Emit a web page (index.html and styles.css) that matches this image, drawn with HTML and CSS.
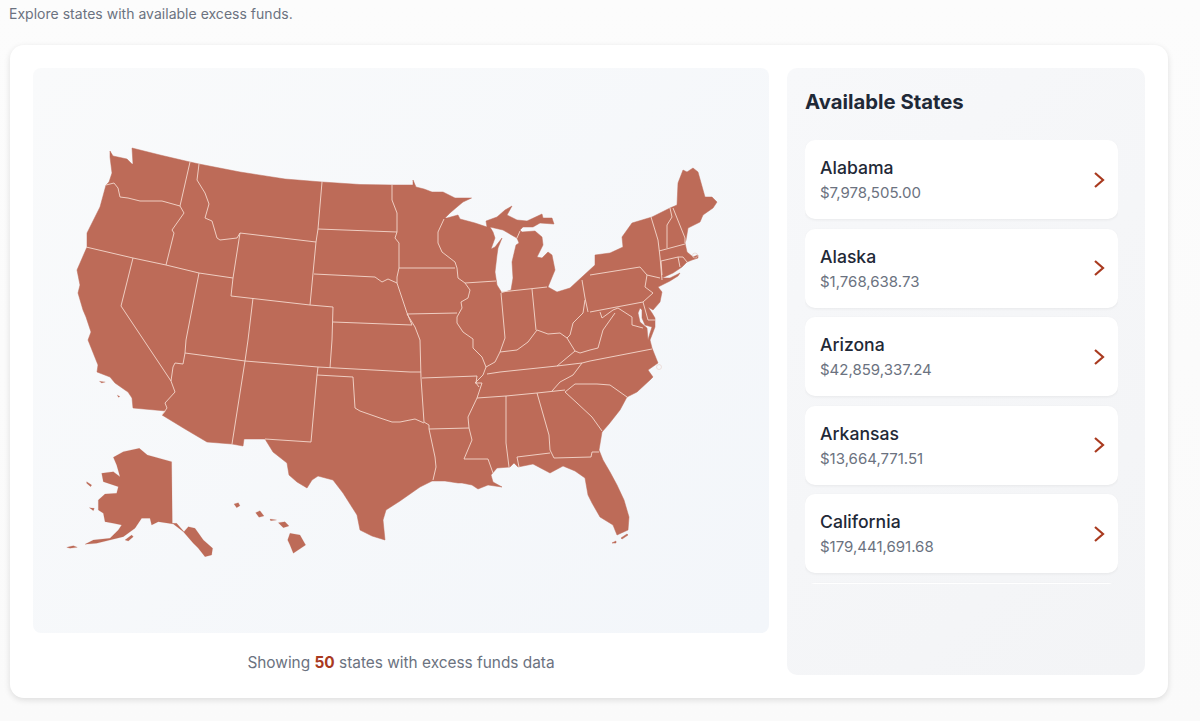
FILE: index.html
```html
<!DOCTYPE html>
<html lang="en">
<head>
<meta charset="utf-8">
<title>Available States</title>
<link rel="stylesheet" href="styles.css">
</head>
<body>
<p class="intro">Explore states with available excess funds.</p>
<main class="card">
  <section class="map-col">
    <div class="map-panel">
      <svg class="map" viewBox="33 68 736 565" aria-label="United States map">
        <path class="land" fill-rule="evenodd" d="M110,151 L113,156 127,159 132,164 133,164 132,148 160,155 190,162 199,164 240,172 285,179 322,182 360,184.5 392,185 413,185 413,180 416,187 424,189 432,192 443,192 455,198 471.5,198 463,202 457,207 450,213 445,218 447,218 458,215 460,219 475,223 487,227 486,221 497,217 505,210 512,206 507,215 517,220 527,221 542,214 543,218 552,218 554,224 540,223 533,227 523,227 520,230 522,232 535,231 542,237 543,245 537,257 542,258 548,252 552,255 555,270 548,287 557,292 570,288 583,276 595,265 595,255 610,253 623,247 622,237 632,223 652,217 670,208 677,205 678,183 683,170 687,172 693,168 698,172 705,197 712,197 717,202 713,208 703,215 700,222 688,228 686,240 685,243 687,252 693,257 698,255 698,258 692,260 687,262 682,267 673,273 662,278 670,278 680,273 678,276 670,281 658,287 662,292 660,302 653,310 648,307 652,313 655,318 655,327 650,340 652,348 658,363 648,370 653,377 650,380 637,392 627,397 620,410 609,424 602,432 599,450 603,460 610,472 617,485 624,500 629,517 628,530 617,535 613,525 600,517 592,503 588,495 585,478 575,471 563,466 550,473 533,464 518,467 514,463 510,467 497,468 491,475 493,482 502,487 488,485 478,489 472,485 462,483 458,483 445,481 432,481 420,487 410,494 400,501 386,510 383,520 385,540 372,536 360,530 357,515 343,493 333,480 318,476 312,480 307,488 297,482 289,475 287,463 273,452 265,439 244,439 243,446 232,444 207,442 185,429 162,415 166,411 133,408 132,398 128,392 125,390 115,383 110,377 97,372 98,365 88,340 91,332 86,317 83,310 78,293 80,285 77,270 87,247 87,233 90,227 100,207 106,185 109,182 112,173 110,157 Z M490,227 L503,230 515,237 517,238 519,243 516,245 512,262 513,278 511,290 502,293 497,285 495,272 497,255 498,248 502,238 495,247 491,249 495,238 493,232 Z M640,308 L638,313 640,322 647,328 648,340 650,333 652,327 645,325 642,318 642,310 Z"/>
        <path class="borders" d="M106,185 L114,183 118,188 120,197 128,198 140,201 162,201 180,206 M190,162 L180,206 184,213 172,230 174,233 166,265 M199,164 L197,180 205,193 209,204 205,218 212,221 217,238 220,240 237,238 240,233 M86,247 L133,258 166,265 199,273 233,278 M133,258 L121,306 171,381 175,392 165,403 167,408 162,415 M199,273 L186,340 185,353 183,364 175,363 173,367 171,381 M185,353 L245,361 318,367 410,372 421,372 M253,298 L248,340 245,361 232,444 M240,233 L233,278 231,296 310,305 333,307 M240,233 L316,242 M322,182 L318,229 316,242 310,305 M318,229 L397,232 M314,274 L375,277 382,282 388,279 397,283 M333,307 L332,340 330,368 M333,322 L412,325 M397,283 L407,313 412,325 M392,185 L392,200 397,213 397,232 395,238 399,243 399,268 397,277 397,283 M399,268 L455,268 M444,219 L438,232 438,243 442,252 455,262 457,268 458,278 465,283 496,281 M465,283 L470,290 468,298 461,302 462,308 457,317 457,323 463,332 473,339 473,348 482,357 486,367 M457,313 L407,314 415,327 420,340 421,378 424,422 429,425 429,429 469,428 M422,378 L477,376 476,383 479,387 M486,367 L483,375 475,383 482,383 477,398 468,417 469,428 472,440 464,459 488,459 493,473 M429,429 L435,457 436,467 433,480 M353,377 L355,408 360,411 380,418 392,422 400,422 415,419 424,423 M318,367 L317,375 353,377 M317,375 L311,442 265,439 M506,396 L506,443 509,467 M537,393 L549,435 550,450 554,458 591,457 592,452 599,452 M517,457 L550,453 M517,457 L519,467 M565,392 L577,403 592,417 602,431 M565,392 L575,384 597,384 610,385 627,397 M477,398 L506,396 537,393 565,390 M552,391 L560,382 573,375 582,363 M487,374 L500,372 557,366 582,363 590,361 652,349 M557,366 L575,351 M567,338 L575,351 M486,367 L495,362 500,352 517,350 528,342 537,330 548,334 560,333 567,338 M501,293 L505,338 500,352 M532,289 L536,330 M501,292 L547,287 M582,280 L585,298 588,312 M585,300 L583,313 573,323 570,335 567,338 M590,275 L640,267 647,275 660,278 M647,275 L645,287 653,293 643,302 M590,312 L643,302 648,320 655,320 M600,312 L602,318 613,310 618,308 632,317 632,325 643,328 M615,313 L603,330 598,348 590,350 580,353 575,351 M651,217 L658,240 660,257 662,280 M670,208 L672,217 667,225 667,248 M673,208 L685,238 685,243 M659,251 L685,244 M661,261 L678,257 683,257 687,262 M678,257 L680,267 M661,261 L662,275 M520,231 L517,238"/>
        <circle class="ring" cx="695" cy="255.500" r="2.500"/>
        <circle class="ring" cx="659" cy="367" r="2.500"/>
        <g class="land" transform="translate(60 340) scale(.3333)">
          <path d="M160,352 L190,335 238,325 262,345 335,365 337,550 350,550 372,575 385,560 405,565 430,600 458,625 455,645 435,650 415,625 400,610 370,575 340,552 295,545 275,555 270,535 245,535 225,565 190,590 150,600 110,610 75,613 100,600 150,595 175,570 185,555 160,550 135,545 130,520 115,510 115,480 135,462 170,460 175,440 130,425 125,400 160,395 180,410 170,375 Z"/>
          <path d="M195,600 L215,585 220,590 205,603 Z M20,622 L40,617 52,622 30,625 Z M80,425 L95,435 92,440 80,430 Z M88,503 L103,505 100,512 Z"/>
          <path d="M690,580 L720,585 737,615 700,640 690,615 683,600 Z M655,548 L675,545 687,558 670,563 Z M587,518 L600,512 612,528 597,532 Z M522,492 L535,488 540,497 530,503 Z M630,537 L650,540 632,542 Z M118,124 L136,126 125,129 Z M172,165 L180,170 175,172 Z"/>
        </g>
        <path class="land" d="M612,543 L616,541 616,543 Z M621,538 L627,534 628,535 622,539 Z"/>
      </svg>
    </div>
    <p class="count">Showing <strong>50</strong> states with excess funds data</p>
  </section>
  <aside class="sidebar">
    <h2>Available States</h2>
    <ul class="list">
      <li class="item"><div class="info"><div class="name">Alabama</div><div class="amount">$7,978,505.00</div></div><svg class="chev" viewBox="0 0 12 18"><path d="M2,2 L10,9 2,16"/></svg></li>
      <li class="item"><div class="info"><div class="name">Alaska</div><div class="amount">$1,768,638.73</div></div><svg class="chev" viewBox="0 0 12 18"><path d="M2,2 L10,9 2,16"/></svg></li>
      <li class="item"><div class="info"><div class="name">Arizona</div><div class="amount">$42,859,337.24</div></div><svg class="chev" viewBox="0 0 12 18"><path d="M2,2 L10,9 2,16"/></svg></li>
      <li class="item"><div class="info"><div class="name">Arkansas</div><div class="amount">$13,664,771.51</div></div><svg class="chev" viewBox="0 0 12 18"><path d="M2,2 L10,9 2,16"/></svg></li>
      <li class="item"><div class="info"><div class="name">California</div><div class="amount">$179,441,691.68</div></div><svg class="chev" viewBox="0 0 12 18"><path d="M2,2 L10,9 2,16"/></svg></li>
      <li class="item"></li>
    </ul>
  </aside>
</main>
</body>
</html>
```
FILE: styles.css
```css
* { box-sizing: border-box; }
html, body { margin: 0; height: 721px; overflow: hidden; }
body {
  background: linear-gradient(180deg, #fcfcfc 0%, #fafafa 100%);
  font-family: Inter, "Noto Sans", sans-serif;
  color: #1f2937;
  padding: 0 32px 0 10px;
}
.intro {
  margin: 0 0 0 -1px;
  height: 45px;
  padding-top: 6px;
  font-size: 14px;
  letter-spacing: .02px;
  line-height: 16px;
  color: #6b7280;
}
.card {
  width: 1158px;
  height: 653px;
  padding: 23px;
  display: flex;
  gap: 18px;
  background: #fff;
  border-radius: 14px;
  box-shadow: 0 2px 6px rgba(0, 0, 0, .12);
}
.map-col { width: 736px; flex: none; }
.map-panel {
  height: 565px;
  border-radius: 8px;
  overflow: hidden;
  background: linear-gradient(135deg, #f9fafb 0%, #f3f6fa 100%);
}
.map { display: block; width: 736px; height: 565px; }
.land { fill: #bd6b58; stroke: #bd6b58; stroke-width: .5; stroke-linejoin: round; }
.borders { fill: none; stroke: #f4d8cd; stroke-width: .9; stroke-linejoin: round; }
.ring { fill: none; stroke: #e6cfc8; stroke-width: .6; }
.count {
  margin: 21px 0 0;
  text-align: center;
  font-size: 15.400px;
  line-height: 18px;
  color: #6b7280;
}
.count strong { color: #a93a1f; font-weight: 700; }
.sidebar {
  width: 358px;
  height: 607px;
  flex: none;
  padding: 21px 18px;
  background: linear-gradient(135deg, #f7f8fa, #f3f4f6);
  border-radius: 10px;
}
h2 {
  margin: 0 0 26px;
  font-size: 20.300px;
  line-height: 25px;
  font-weight: 700;
  color: #1f2937;
}
.list {
  list-style: none;
  margin: 0;
  padding: 0;
  width: 313px;
  height: 444px;
  overflow: hidden;
  display: flex;
  flex-direction: column;
  gap: 9.5px;
}
.item {
  flex: none;
  height: 79px;
  padding: 0 13px 0 15px;
  display: flex;
  align-items: center;
  justify-content: space-between;
  background: #fff;
  border-radius: 10px;
  box-shadow: 0 1px 3px rgba(0, 0, 0, .06);
}
.info { padding-top: 2px; }
.name { font-size: 17.600px; line-height: 24px; font-weight: 500; color: #1f2937; }
.amount { font-size: 15px; line-height: 25px; color: #6b7280; }
.chev { width: 12px; height: 18px; fill: none; stroke: #a93a1f; stroke-width: 2.2; }
```
